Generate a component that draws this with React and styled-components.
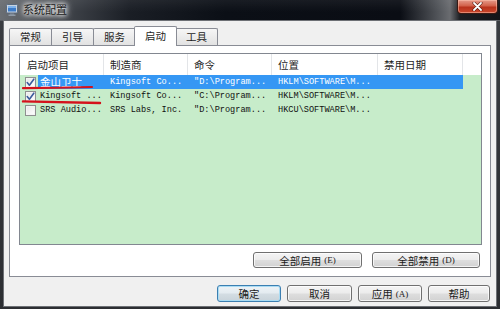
import React from 'react';
import styled, { createGlobalStyle, css } from 'styled-components';

const Global = createGlobalStyle`
  html, body { margin: 0; padding: 0; background: #202226; }
  body { font-family: "Noto Sans CJK SC", "Liberation Sans", sans-serif; }
  #root { width: 500px; height: 309px; overflow: hidden; }
`;

const Window = styled.div`
  width: 500px;
  height: 309px;
  display: flex;
  flex-direction: column;
  background: linear-gradient(to bottom, #3a3d42, #2c2e32);
`;

const TitleBar = styled.div`
  height: 21px;
  flex: none;
  display: flex;
  align-items: flex-start;
  background:
    linear-gradient(to bottom, rgba(255,255,255,0.06), rgba(0,0,0,0) 60%),
    linear-gradient(90deg, #6a6e73 0%, #4a4e54 10%, #1a1e25 26%, #0b0f16 45%, #0a0d14 80%, #55585d 88%, #6a6c70 90%, #1c1e22 92%, #121418 100%);
  border-bottom: 1px solid #5b5e63;
  box-sizing: border-box;
`;

const TitleIcon = styled.svg`
  width: 12px;
  height: 12px;
  margin: 4px 0 0 6px;
  flex: none;
`;

const TitleText = styled.div`
  margin: 2px 0 0 5px;
  font-size: 11px;
  line-height: 14px;
  color: #1a1a1a;
  text-shadow: 0 0 4px #ffffff, 0 0 6px #ffffff, 0 0 8px rgba(255,255,255,0.9);
`;

const Spacer = styled.div`
  flex: 1;
`;

const CloseButton = styled.div`
  width: 41px;
  height: 14px;
  margin-right: 2px;
  box-sizing: border-box;
  border: 1px solid #3a1a14;
  border-top: none;
  border-radius: 0 0 4px 4px;
  background: linear-gradient(to bottom, #e59a8a 0%, #d2614a 45%, #b8321c 55%, #c9472c 100%);
  box-shadow: inset 0 0 0 1px rgba(255,200,180,0.5);
  display: flex;
  align-items: center;
  justify-content: center;
`;

const Body = styled.div`
  flex: 1;
  display: flex;
  padding: 0 4px 3px 4px;
  min-height: 0;
`;

const Client = styled.div`
  flex: 1;
  display: flex;
  flex-direction: column;
  background: #f0f0f0;
  padding: 5px 0 4px 0;
  box-shadow: 0 0 0 1px #6d7075;
`;

const TabRow = styled.div`
  height: 19px;
  display: flex;
  align-items: flex-end;
  padding-left: 5px;
  position: relative;
  z-index: 2;
`;

const Tab = styled.div`
  height: 17px;
  box-sizing: border-box;
  padding: 0 10px;
  border: 1px solid #898c95;
  border-bottom: none;
  border-radius: 2px 2px 0 0;
  background: linear-gradient(to bottom, #f6f6f6 0%, #ececec 50%, #e2e2e2 100%);
  font-size: 10.5px;
  line-height: 16px;
  color: #1e1e1e;
  margin-right: -1px;
  ${(p) => p.$active && css`
    height: 20px;
    margin: 0 -2px -1px -1px;
    padding: 0 10px;
    background: #ffffff;
    line-height: 17px;
    position: relative;
    z-index: 3;
  `}
`;

const Panel = styled.div`
  flex: 1;
  margin: 0 5px;
  border: 1px solid #898c95;
  background: #ffffff;
  display: flex;
  flex-direction: column;
  padding: 7px 8px 8px 9px;
  min-height: 0;
`;

const ListBox = styled.div`
  flex: 1;
  border: 1px solid #828790;
  display: flex;
  flex-direction: column;
  min-height: 0;
  position: relative;
`;

const Header = styled.div`
  height: 21px;
  display: flex;
  background: #ffffff;
  flex: none;
`;

const HeaderCell = styled.div`
  width: ${(p) => p.$w}px;
  flex: ${(p) => (p.$w ? 'none' : '1')};
  box-sizing: border-box;
  padding-left: ${(p) => p.$pad ?? 6}px;
  border-right: ${(p) => (p.$last ? 'none' : '1px solid #e3e5e8')};
  font-size: 10.5px;
  line-height: 21px;
  color: #1e1e1e;
  white-space: nowrap;
`;

const ListBody = styled.div`
  flex: 1;
  background: #c7ecca;
  position: relative;
`;

const Row = styled.div`
  height: 14px;
  display: flex;
`;

const CheckCell = styled.div`
  width: 18px;
  flex: none;
  display: flex;
  align-items: center;
  padding-left: 5px;
  box-sizing: border-box;
`;

const CheckBox = styled.div`
  width: 11px;
  height: 11px;
  box-sizing: border-box;
  border: 1px solid #8e8f8f;
  background: linear-gradient(135deg, #e6e6e6, #ffffff);
  box-shadow: inset 0 0 0 1px #f4f4f4;
  display: flex;
  align-items: center;
  justify-content: center;
`;

const RowMain = styled.div`
  display: flex;
  width: 425px;
  background: ${(p) => (p.$selected ? '#3597f4' : 'transparent')};
  color: ${(p) => (p.$selected ? '#ffffff' : '#111111')};
`;

const Cell = styled.div`
  width: ${(p) => p.$w}px;
  flex: none;
  box-sizing: border-box;
  padding-left: ${(p) => p.$pad ?? 6}px;
  white-space: nowrap;
  overflow: hidden;
  font-family: ${(p) => (p.$cjk ? '"Noto Sans CJK SC", sans-serif' : '"Liberation Mono", "Noto Sans CJK SC", monospace')};
  font-size: ${(p) => (p.$cjk ? '10.5px' : '8.6px')};
  line-height: 14px;
`;

const Annotation = styled.svg`
  position: absolute;
  left: 0;
  top: 0;
  pointer-events: none;
`;

const ButtonRow = styled.div`
  display: flex;
  justify-content: flex-end;
  gap: ${(p) => p.$gap}px;
  margin-top: ${(p) => p.$mt}px;
  margin-right: ${(p) => p.$mr}px;
  flex: none;
`;

const Button = styled.div`
  width: ${(p) => p.$w}px;
  height: ${(p) => p.$h}px;
  box-sizing: border-box;
  border: 1px solid #707070;
  border-radius: 3px;
  background: linear-gradient(to bottom, #f4f4f4 0%, #ececec 48%, #dedede 52%, #d2d2d2 100%);
  box-shadow: inset 0 0 0 1px rgba(255,255,255,0.75);
  font-size: 10.5px;
  color: #1a1a1a;
  display: flex;
  align-items: center;
  justify-content: center;
  white-space: nowrap;
  ${(p) => p.$default && css`
    border-color: #3c7fb1;
    background: linear-gradient(to bottom, #eef3f6 0%, #e3ebf0 48%, #d4dde3 52%, #c8d3da 100%);
    box-shadow: inset 0 0 0 1px #a9dcf4;
  `}
`;

const Shortcut = styled.span`
  font-size: 9px;
  margin-left: 3px;
  font-family: "Liberation Serif", serif;
`;

const Check = () => (
  <svg width="9" height="9" viewBox="0 0 9 9">
    <path d="M1.2 4.6 L3.4 7.2 L7.8 1.2" fill="none" stroke="#3b5b9c" strokeWidth="1.6" strokeLinecap="round" strokeLinejoin="round" />
  </svg>
);

const rows = [
  { checked: true, selected: true, name: '金山卫士', cjk: true, maker: 'Kingsoft Co...', cmd: '"D:\\Program...', loc: 'HKLM\\SOFTWARE\\M...' },
  { checked: true, selected: false, name: 'Kingsoft ...', cjk: false, maker: 'Kingsoft Co...', cmd: '"C:\\Program...', loc: 'HKLM\\SOFTWARE\\M...' },
  { checked: false, selected: false, name: 'SRS Audio...', cjk: false, maker: 'SRS Labs, Inc.', cmd: '"D:\\Program...', loc: 'HKCU\\SOFTWARE\\M...' },
];

const headers = [
  { label: '启动项目', w: 84, pad: 7 },
  { label: '制造商', w: 84 },
  { label: '命令', w: 84 },
  { label: '位置', w: 106 },
  { label: '禁用日期', w: 85 },
];

const tabs = ['常规', '引导', '服务', '启动', '工具'];

export default function App() {
  return (
    <>
      <Global />
      <Window>
        <TitleBar>
          <TitleIcon viewBox="0 0 12 12">
            <rect x="0.5" y="0.5" width="11" height="8.5" rx="1" fill="#c9d3de" stroke="#5a6b80" />
            <rect x="2" y="2" width="8" height="5.5" fill="#3d7cc9" />
            <rect x="2" y="2" width="8" height="2" fill="#7fb2ea" />
            <rect x="4" y="9.5" width="4" height="1.2" fill="#7d8a99" />
            <rect x="2.5" y="10.6" width="7" height="1.2" fill="#9aa6b4" />
          </TitleIcon>
          <TitleText>系统配置</TitleText>
          <Spacer />
          <CloseButton>
            <svg width="11" height="9" viewBox="0 0 11 9">
              <path d="M2 1 L9 8 M9 1 L2 8" stroke="#4a1208" strokeWidth="3" strokeLinecap="round" />
              <path d="M2 1 L9 8 M9 1 L2 8" stroke="#ffffff" strokeWidth="1.8" strokeLinecap="round" />
            </svg>
          </CloseButton>
        </TitleBar>
        <Body>
          <Client>
            <TabRow>
              {tabs.map((t) => (
                <Tab key={t} $active={t === '启动'}>{t}</Tab>
              ))}
            </TabRow>
            <Panel>
              <ListBox>
                <Header>
                  {headers.map((h) => (
                    <HeaderCell key={h.label} $w={h.w} $pad={h.pad}>{h.label}</HeaderCell>
                  ))}
                  <HeaderCell $last />
                </Header>
                <ListBody>
                  {rows.map((r) => (
                    <Row key={r.name}>
                      <CheckCell>
                        <CheckBox>{r.checked && <Check />}</CheckBox>
                      </CheckCell>
                      <RowMain $selected={r.selected}>
                        <Cell $w={66} $pad={2} $cjk={r.cjk}>{r.name}</Cell>
                        <Cell $w={84}>{r.maker}</Cell>
                        <Cell $w={84}>{r.cmd}</Cell>
                        <Cell $w={106}>{r.loc}</Cell>
                        <Cell $w={85}></Cell>
                      </RowMain>
                    </Row>
                  ))}
                  <Annotation width="120" height="40" viewBox="0 0 120 40">
                    <path d="M3 13.2 Q38 12.8 72 12" fill="none" stroke="#d4121c" strokeWidth="2.2" strokeLinecap="round" />
                    <path d="M3 26.4 Q42 27.2 80 28" fill="none" stroke="#d4121c" strokeWidth="2.4" strokeLinecap="round" />
                  </Annotation>
                </ListBody>
              </ListBox>
              <ButtonRow $gap={10} $mt={7} $mr={2}>
                <Button $w={109} $h={16}>全部启用<Shortcut>(E)</Shortcut></Button>
                <Button $w={108} $h={16}>全部禁用<Shortcut>(D)</Shortcut></Button>
              </ButtonRow>
            </Panel>
            <ButtonRow $gap={6} $mt={8} $mr={6}>
              <Button $w={64} $h={17} $default>确定</Button>
              <Button $w={65} $h={17}>取消</Button>
              <Button $w={64} $h={17}>应用<Shortcut>(A)</Shortcut></Button>
              <Button $w={62} $h={17}>帮助</Button>
            </ButtonRow>
          </Client>
        </Body>
      </Window>
    </>
  );
}
